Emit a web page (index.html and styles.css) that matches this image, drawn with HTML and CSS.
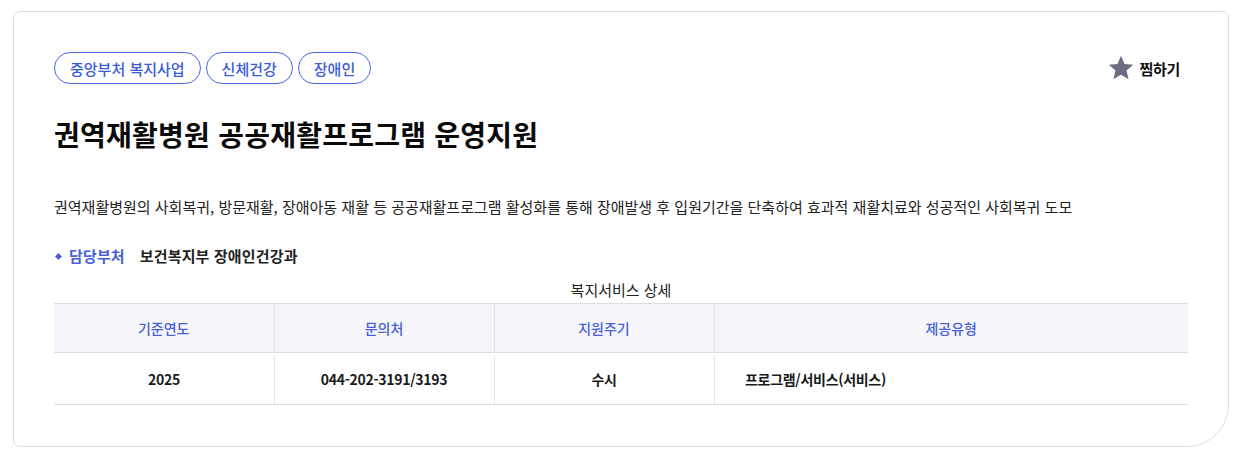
FILE: index.html
```html
<!DOCTYPE html>
<html lang="ko">
<head>
<meta charset="utf-8">
<link rel="stylesheet" href="styles.css">
</head>
<body>
<div class="card">
  <div class="top">
    <div class="tags">
      <span class="tag">중앙부처 복지사업</span>
      <span class="tag">신체건강</span>
      <span class="tag">장애인</span>
    </div>
    <button class="fav">
      <svg width="26" height="26" viewBox="0 0 24 24"><path d="M12 0.8l3.2 7.5 8.1.7-6.2 5.4 1.9 8L12 18.2l-7 4.2 1.9-8L.7 9l8.1-.7z" fill="#6b6e80"/></svg>
      <span>찜하기</span>
    </button>
  </div>
  <h1 class="title">권역재활병원 공공재활프로그램 운영지원</h1>
  <p class="desc">권역재활병원의 사회복귀, 방문재활, 장애아동 재활 등 공공재활프로그램 활성화를 통해 장애발생 후 입원기간을 단축하여 효과적 재활치료와 성공적인 사회복귀 도모</p>
  <div class="dept">
    <span class="dept-label">담당부처</span>
    <span class="dept-value">보건복지부 장애인건강과</span>
  </div>
  <table class="detail">
    <caption>복지서비스 상세</caption>
    <thead>
      <tr><th>기준연도</th><th>문의처</th><th>지원주기</th><th>제공유형</th></tr>
    </thead>
    <tbody>
      <tr><td>2025</td><td>044-202-3191/3193</td><td>수시</td><td class="left">프로그램/서비스(서비스)</td></tr>
    </tbody>
  </table>
</div>
</body>
</html>
```
FILE: styles.css
```css
* { box-sizing: border-box; }
html, body { margin: 0; background: #fff; }
body {
  padding: 11px 10px 0 13px;
  font-family: "Noto Sans CJK KR", "Noto Sans", sans-serif;
  color: #111;
}
.card {
  width: 1216px;
  height: 436px;
  border: 1px solid #dedede;
  border-radius: 7px 7px 42px 7px;
  padding: 40px 48px 0 40px;
}
.top {
  display: flex;
  justify-content: space-between;
  align-items: center;
}
.tags { display: flex; gap: 5px; }
.tag {
  display: inline-flex;
  align-items: center;
  height: 32px;
  padding: 0 15px;
  border: 1px solid #4a6be0;
  border-radius: 16px;
  color: #3a5bd6;
  font-size: 15px;
  font-weight: 500;
}
.fav {
  display: flex;
  align-items: center;
  gap: 5px;
  background: none;
  border: 0;
  padding: 0;
  font-family: inherit;
  font-size: 15px;
  font-weight: 700;
  color: #111;
  letter-spacing: -0.3px;
}
.title {
  margin: 30px 0 0;
  font-size: 28px;
  font-weight: 700;
  letter-spacing: 0.25px;
  line-height: 40px;
  color: #0a0a0a;
}
.desc {
  margin: 43px 0 0;
  font-size: 15px;
  line-height: 20px;
  color: #222;
}
.dept {
  margin-top: 29px;
  display: flex;
  align-items: center;
  font-size: 15px;
  font-weight: 700;
  letter-spacing: 0.15px;
  line-height: 20px;
}
.dept-label {
  position: relative;
  padding-left: 15px;
  color: #4a5fd8;
  margin-right: 15px;
}
.dept-label::before {
  content: "";
  position: absolute;
  left: 2px;
  top: 8px;
  width: 5px;
  height: 5px;
  background: #4a5fd8;
  transform: rotate(45deg);
}
.dept-value { color: #222; }
.detail {
  width: 1134px;
  margin-top: 14px;
  border-collapse: collapse;
  font-size: 14px;
}
.detail caption {
  font-size: 15px;
  line-height: 20px;
  padding-bottom: 3px;
  color: #222;
}
.detail th {
  height: 49px;
  background: #f5f6fa;
  color: #4a5fd8;
  font-weight: 500;
  border-top: 1px solid #dddddd;
  border-bottom: 1px solid #dddddd;
  border-left: 1px solid #e3e3e3;
  width: 220px;
}
.detail th:first-child { border-left: 0; }
.detail th:last-child { width: auto; }
.detail td {
  position: relative;
  height: 52px;
  text-align: center;
  font-weight: 700;
  color: #1a1a1a;
  letter-spacing: -0.3px;
  border-bottom: 1px solid #dddddd;
}
.detail td + td::before {
  content: "";
  position: absolute;
  left: 0;
  top: 3px;
  bottom: 0;
  width: 1px;
  background: #e3e3e3;
}
.detail td.left { text-align: left; padding-left: 31px; }
```
